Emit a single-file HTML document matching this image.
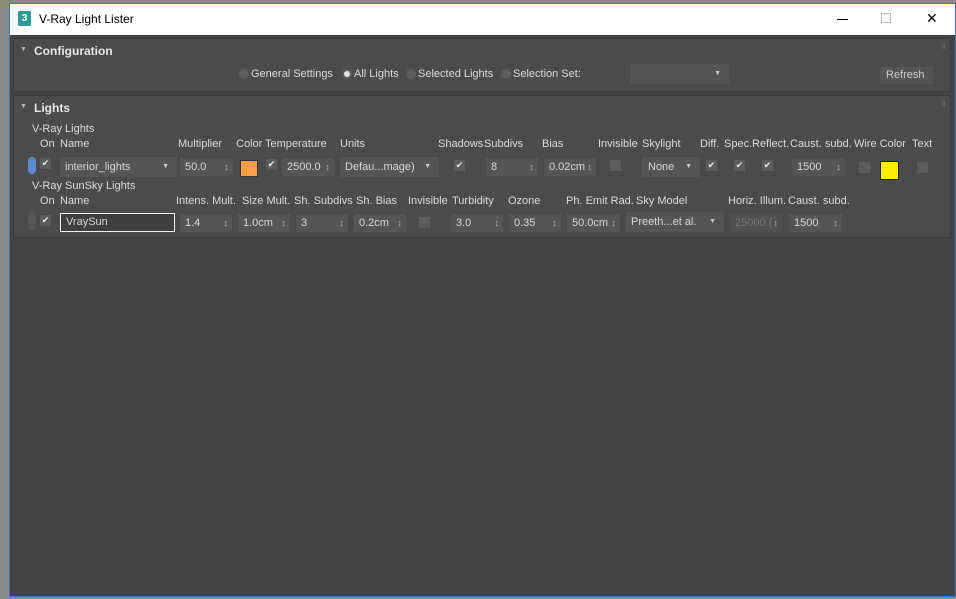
<!DOCTYPE html>
<html><head><style>
*{box-sizing:border-box;margin:0;padding:0}
body{width:956px;height:599px;position:relative;overflow:hidden;background:#8a8a8a;font-family:"Liberation Sans",sans-serif;font-size:11px;color:#dcdcdc}
.a{position:absolute;white-space:nowrap}
.win{position:absolute;left:9px;top:3px;width:947px;height:594px;border:1px solid #3a78b8;background:#444}
.tb{position:absolute;left:0;top:0;width:100%;height:31px;background:#fff}
.pan{position:absolute;background:#4b4b4b;border:1px solid #3c3c3c}
.f{position:absolute;background:#555;height:18px;color:#d8d8d8;padding:0 0 0 5px;line-height:18px;font-size:11px}
.sp:after{content:"\2195";position:absolute;right:4px;top:0;font-size:9px;color:#bbb}
.dd:after{content:"\25BC";position:absolute;right:8px;top:0;font-size:7px;color:#ccc}
.cb{position:absolute;width:11px;height:11px;background:#5c5c5c;font-size:9px;color:#eee;line-height:11px;text-align:center}
.rd{position:absolute;width:10px;height:10px;border-radius:50%;background:#5e5e5e}
.h{font-weight:bold;color:#e6e6e6;font-size:12px}
.tri{font-size:7px;color:#bbb}
</style></head><body>
<div class="win">
 <div class="tb">
  <div class="a" style="left:8px;top:7px;width:13px;height:15px;background:#2e9c9c;color:#fff;font-size:10px;font-weight:bold;text-align:center;line-height:15px;border-radius:1px">3</div>
  <div class="a" style="left:29px;top:8px;font-size:12px;color:#000">V-Ray Light Lister</div>
  <div class="a" style="left:827px;top:15px;width:11px;height:1px;background:#000"></div>
  <div class="a" style="left:871px;top:9px;width:10px;height:10px;border:1px solid #bbb"></div>
  <div class="a" style="left:916px;top:6px;font-size:14px;color:#000">✕</div>
 </div>
 <div class="pan" style="left:3px;top:34px;width:938px;height:54px">
  <div class="a tri" style="left:6px;top:7px">▼</div>
  <div class="a h" style="left:20px;top:5px">Configuration</div>
  <div class="a" style="right:4px;top:5px;font-size:6px;color:#888">⠿</div>
  <div class="rd" style="left:225px;top:30px"></div><div class="a" style="left:237px;top:29px">General Settings</div>
  <div class="rd" style="left:328px;top:30px;background:#e0e0e0;border:2px solid #5e5e5e"></div><div class="a" style="left:340px;top:29px">All Lights</div>
  <div class="rd" style="left:392px;top:30px"></div><div class="a" style="left:404px;top:29px">Selected Lights</div>
  <div class="rd" style="left:487px;top:30px"></div><div class="a" style="left:499px;top:29px">Selection Set:</div>
  <div class="f dd" style="left:616px;top:25px;width:99px;height:20px;line-height:20px"></div>
  <div class="f" style="left:866px;top:28px;width:53px;height:17px;line-height:17px;padding-left:6px;color:#ccc">Refresh</div>
 </div>
 <div class="pan" style="left:3px;top:91px;width:938px;height:143px">
  <div class="a tri" style="left:6px;top:7px">▼</div>
  <div class="a h" style="left:20px;top:5px">Lights</div>
  <div class="a" style="right:4px;top:5px;font-size:6px;color:#888">⠿</div>
  <div class="a" style="left:18px;top:27px">V-Ray Lights</div>
  <div class="a" style="top:42px;left:26px">On</div><div class="a" style="top:42px;left:46px">Name</div>
  <div class="a" style="top:42px;left:164px">Multiplier</div><div class="a" style="top:42px;left:222px">Color</div>
  <div class="a" style="top:42px;left:251px">Temperature</div><div class="a" style="top:42px;left:326px">Units</div>
  <div class="a" style="top:42px;left:424px">Shadows</div><div class="a" style="top:42px;left:470px">Subdivs</div>
  <div class="a" style="top:42px;left:528px">Bias</div><div class="a" style="top:42px;left:584px">Invisible</div>
  <div class="a" style="top:42px;left:628px">Skylight</div><div class="a" style="top:42px;left:686px">Diff.</div>
  <div class="a" style="top:42px;left:710px">Spec.</div><div class="a" style="top:42px;left:738px">Reflect.</div>
  <div class="a" style="top:42px;left:776px">Caust. subd.</div><div class="a" style="top:42px;left:840px">Wire Color</div>
  <div class="a" style="top:42px;left:898px">Text</div>
  <div class="a" style="left:14px;top:61px;width:8px;height:17px;border-radius:4px;background:#5b8dd0"></div>
  <div class="cb" style="left:26px;top:62px">✔</div>
  <div class="f dd" style="left:46px;top:61px;width:117px;height:20px;line-height:20px">interior_lights</div>
  <div class="f sp" style="left:166px;top:62px;width:53px">50.0</div>
  <div class="a" style="left:226px;top:64px;width:18px;height:17px;background:#f9a047;border:1px solid #333"></div>
  <div class="cb" style="left:252px;top:63px">✔</div>
  <div class="f sp" style="left:268px;top:62px;width:52px">2500.0</div>
  <div class="f dd" style="left:326px;top:61px;width:99px;height:20px;line-height:20px">Defau...mage)</div>
  <div class="cb" style="left:440px;top:64px">✔</div>
  <div class="f sp" style="left:472px;top:62px;width:52px">8</div>
  <div class="f sp" style="left:530px;top:62px;width:52px">0.02cm</div>
  <div class="cb" style="left:596px;top:64px"></div>
  <div class="f dd" style="left:628px;top:61px;width:58px;height:20px;line-height:20px;padding-left:6px">None</div>
  <div class="cb" style="left:692px;top:64px">✔</div>
  <div class="cb" style="left:720px;top:64px">✔</div>
  <div class="cb" style="left:748px;top:64px">✔</div>
  <div class="f sp" style="left:778px;top:62px;width:53px">1500</div>
  <div class="cb" style="left:845px;top:66px"></div>
  <div class="a" style="left:866px;top:65px;width:19px;height:19px;background:#ffee00;border:1px solid #222"></div>
  <div class="cb" style="left:903px;top:66px"></div>
  <div class="a" style="left:18px;top:84px">V-Ray SunSky Lights</div>
  <div class="a" style="top:99px;left:26px">On</div><div class="a" style="top:99px;left:46px">Name</div>
  <div class="a" style="top:99px;left:162px">Intens. Mult.</div><div class="a" style="top:99px;left:228px">Size Mult.</div>
  <div class="a" style="top:99px;left:280px">Sh. Subdivs</div><div class="a" style="top:99px;left:342px">Sh. Bias</div>
  <div class="a" style="top:99px;left:394px">Invisible</div><div class="a" style="top:99px;left:438px">Turbidity</div>
  <div class="a" style="top:99px;left:494px">Ozone</div><div class="a" style="top:99px;left:552px">Ph. Emit Rad.</div>
  <div class="a" style="top:99px;left:622px">Sky Model</div><div class="a" style="top:99px;left:714px">Horiz. Illum.</div>
  <div class="a" style="top:99px;left:774px">Caust. subd.</div>
  <div class="a" style="left:14px;top:116px;width:8px;height:18px;border-radius:4px;background:#585858"></div>
  <div class="cb" style="left:26px;top:119px">✔</div>
  <div class="f" style="left:46px;top:117px;width:115px;height:19px;line-height:17px;background:#3f3f3f;border:1px solid #f0f0f0">VraySun</div>
  <div class="f sp" style="left:166px;top:118px;width:52px">1.4</div>
  <div class="f sp" style="left:224px;top:118px;width:52px">1.0cm</div>
  <div class="f sp" style="left:282px;top:118px;width:52px">3</div>
  <div class="f sp" style="left:340px;top:118px;width:52px">0.2cm</div>
  <div class="cb" style="left:405px;top:121px"></div>
  <div class="f sp" style="left:437px;top:118px;width:52px">3.0</div>
  <div class="f sp" style="left:495px;top:118px;width:52px">0.35</div>
  <div class="f sp" style="left:553px;top:118px;width:53px">50.0cm</div>
  <div class="f dd" style="left:612px;top:116px;width:98px;height:20px;line-height:20px">Preeth...et al.</div>
  <div class="f sp" style="left:716px;top:118px;width:52px;color:#777;background:#505050">25000.(</div>
  <div class="f sp" style="left:775px;top:118px;width:53px">1500</div>
 </div>
</div>
</body></html>
